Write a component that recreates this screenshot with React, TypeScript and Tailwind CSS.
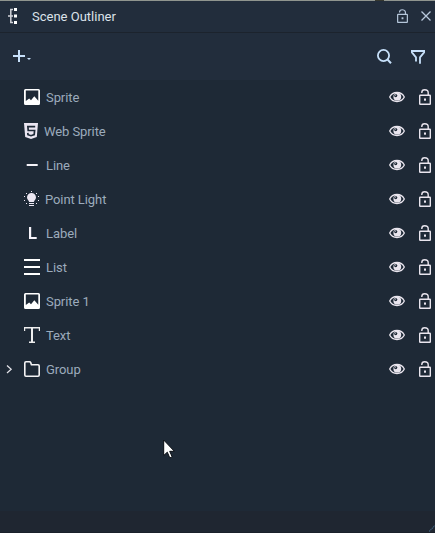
import React from "react";

type Kind = "image" | "web" | "line" | "light" | "label" | "list" | "text" | "folder";

interface Item {
  name: string;
  kind: Kind;
  gap: string;
  expandable?: boolean;
}

const items: Item[] = [
  { name: "Sprite", kind: "image", gap: "ml-[6px]" },
  { name: "Web Sprite", kind: "web", gap: "ml-[4px]" },
  { name: "Line", kind: "line", gap: "ml-[6px]" },
  { name: "Point Light", kind: "light", gap: "ml-[5px]" },
  { name: "Label", kind: "label", gap: "ml-[6px]" },
  { name: "List", kind: "list", gap: "ml-[6px]" },
  { name: "Sprite 1", kind: "image", gap: "ml-[6px]" },
  { name: "Text", kind: "text", gap: "ml-[6px]" },
  { name: "Group", kind: "folder", gap: "ml-[6px]", expandable: true },
];

function KindIcon({ kind }: { kind: Kind }) {
  return (
    <svg width="16" height="16" viewBox="0 0 16 16" fill="none" className="shrink-0">
      {kind === "image" && (
        <path
          fill="#ffffff"
          fillRule="evenodd"
          d="M1.5 0h13A1.5 1.5 0 0 1 16 1.5v13a1.5 1.5 0 0 1-1.5 1.5h-13A1.5 1.5 0 0 1 0 14.5v-13A1.5 1.5 0 0 1 1.5 0ZM1.8 1.6V12L5.2 9.500L7 11.300L10.300 7.200L14.300 11.800V1.600Z"
        />
      )}
      {kind === "web" && (
        <>
          <path fill="#ebe6f2" d="M0 0h14l-1.200 14L7 16 1.200 14Z" />
          <path stroke="#1e2936" strokeWidth="1.700" d="M11.200 3.700H3.900l.3 3.800h6.400l-.4 4.100L7 12.700l-3-1-.2-1.800" />
        </>
      )}
      {kind === "line" && <path fill="#f4f2f8" d="M2.700 7h11v2h-11z" />}
      {kind === "light" && (
        <>
          <path fill="#ebe6f2" d="M7.500 2a4.500 4.500 0 0 1 4.500 4.500c0 2-1.600 2.700-2.200 4.500H5.200C4.600 9.200 3 8.500 3 6.500A4.500 4.500 0 0 1 7.500 2ZM5 12h5v1H5zM5 14h5v1H5z" />
          <path fill="#ebe6f2" d="M7 0h1v1H7zM2 2h1v1H2zM12 2h1v1h-1zM0 5h1v1H0zM14 5h1v1h-1zM0 9h1v1H0zM14 9h1v1h-1zM2 12h1v1H2zM12 12h1v1h-1z" />
        </>
      )}
      {kind === "label" && <path fill="#f6f3fa" d="M5 2h2.200v10h5.500v2H5z" />}
      {kind === "list" && <path fill="#ffffff" d="M0 0h16v2H0zM0 7h16v2H0zM0 14h16v2H0z" />}
      {kind === "text" && (
        <path fill="#eeeeef" d="M0 0h16v4h-1.200V1.600H9v12.800h2V16H5v-1.600h2V1.600H1.200V4H0z" />
      )}
      {kind === "folder" && (
        <path
          stroke="#f4f3f5"
          strokeWidth="1.600"
          strokeLinejoin="round"
          d="M.8 2c0-.8.5-1.200 1.200-1.200h3.500c.6 0 1 .3 1.200.8l.7 2.200H14c.8 0 1.200.5 1.200 1.200V14c0 .8-.4 1.200-1.200 1.200H2c-.8 0-1.200-.4-1.200-1.200Z"
        />
      )}
    </svg>
  );
}

function Eye() {
  return (
    <svg width="16" height="12" viewBox="0 0 16 12" fill="none" className="shrink-0">
      <path
        stroke="#e9e5ee"
        strokeWidth="1.300"
        d="M.7 6C2 3.200 4.700 1.500 8 1.500s6 1.700 7.300 4.500C14 8.800 11.300 10.500 8 10.500S2 8.800.7 6Z"
      />
      <circle cx="8.300" cy="5.700" r="3.900" fill="#e9e5ee" />
      <circle cx="6.700" cy="4.600" r="1.600" fill="#1e2936" />
      <circle cx="6.300" cy="4.100" r=".6" fill="#e9e5ee" />
    </svg>
  );
}

function Lock({ small = false }: { small?: boolean }) {
  return (
    <svg
      width={small ? 11 : 12}
      height={small ? 14 : 16}
      viewBox="0 0 12 16"
      preserveAspectRatio="none"
      fill="none"
      stroke={small ? "#b5c6da" : "#e9e5ee"}
      strokeWidth={small ? 1.3 : 1.4}
      className="shrink-0"
    >
      <rect x=".7" y="6.200" width="10.600" height="9.100" rx=".5" />
      <path d="M2.800 4V3.500C2.800 1.800 4 .8 5.700.8s3.500 1 3.500 2.900v2.500" />
      <rect x="5" y="9.500" width="2" height="2.200" fill={small ? "#b5c6da" : "#e9e5ee"} stroke="none" />
    </svg>
  );
}

function Row({ item }: { item: Item }) {
  return (
    <div className="flex h-[34px] items-center pr-1">
      <div className="flex w-6 shrink-0 items-center pl-[6px]">
        {item.expandable && (
          <svg width="7" height="10" viewBox="0 0 7 10" fill="none">
            <path d="M1 1.500 5.200 5.300 1 9" stroke="#e4e4ea" strokeWidth="1.200" />
          </svg>
        )}
      </div>
      <KindIcon kind={item.kind} />
      <span
        className={`${item.gap} flex-1 pt-[2px] text-[13px] leading-[18px] tracking-[-0.08px] text-[#9cabbc]`}
      >
        {item.name}
      </span>
      <Eye />
      <div className="ml-[14px] flex">
        <Lock />
      </div>
    </div>
  );
}

export default function App() {
  return (
    <div className="relative flex h-[533px] w-[435px] flex-col overflow-hidden bg-[#1e2936] font-['Roboto',sans-serif]">
      <div className="flex h-px shrink-0 bg-[#90958f]">
        <div className="ml-[375px] w-[9px] bg-[#35372f]" />
      </div>
      <header className="flex h-[32px] shrink-0 items-center border-b border-[#1c232d] bg-[#222d3c] pr-[3px] pb-px pl-2">
        <svg width="10" height="16" viewBox="0 0 10 16" className="shrink-0">
          <path fill="#ffffff" d="M6 0h3v3H6zM6 6.500h3v3H6zM6 13h3v3H6z" />
          <path fill="none" stroke="#d3d4da" strokeWidth="1.500" d="M5 1.500H2.800v13H5M0 8h5" />
        </svg>
        <span className="ml-[14px] flex-1 pt-[2px] text-[13px] leading-[18px] text-[#dce2e9]">
          Scene Outliner
        </span>
        <Lock small />
        <svg width="10" height="10" viewBox="0 0 10 10" className="mr-[1px] ml-[13px] shrink-0">
          <path d="M.5.5l9 9M9.500.5l-9 9" stroke="#b8c8dc" strokeWidth="1.300" />
        </svg>
      </header>
      <div className="flex h-[47px] shrink-0 items-center bg-[#222d3c] pr-[10px] pb-px pl-[13px]">
        <svg width="18" height="12" viewBox="0 0 18 12" className="shrink-0">
          <path fill="#c7e0fa" d="M5 0h2v5h5v2H7v5H5V7H0V5h5zM14 8h4l-2 2z" />
        </svg>
        <svg width="15" height="15" viewBox="0 0 15 15" fill="none" className="mt-px ml-auto shrink-0">
          <circle cx="6.500" cy="6.500" r="5.600" stroke="#c7e0fa" strokeWidth="1.800" />
          <path d="m10.500 10.500 3.500 3.700" stroke="#c7e0fa" strokeWidth="2" />
        </svg>
        <svg width="14" height="14" viewBox="0 0 14 14" fill="none" className="mt-[2px] ml-[19px] shrink-0">
          <path
            d="M5 11.500V7.300L.9 2.400V1h12.200v1.400L9 7.300v6.500"
            stroke="#c7e0fa"
            strokeWidth="1.800"
          />
        </svg>
      </div>
      <main className="flex-1">
        {items.map((item) => (
          <Row key={item.name} item={item} />
        ))}
      </main>
      <footer className="flex h-[22px] shrink-0 items-end justify-end border-b border-[#1a202a] bg-[#1f2631]">
        <svg width="6" height="7" viewBox="0 0 6 7">
          <path d="M0 6.500 6 .5" stroke="#3b5974" strokeWidth="1.300" strokeDasharray="1.400 .6" />
        </svg>
      </footer>
      <svg width="12" height="21" viewBox="0 0 12 21" className="absolute top-[439px] left-[163px]">
        <path
          d="M.7 1v15.500l3.600-3.300 2.500 5.700 2.400-1-2.500-5.600h4.700Z"
          fill="#ffffff"
          stroke="#080c12"
          strokeWidth="1"
        />
      </svg>
    </div>
  );
}
